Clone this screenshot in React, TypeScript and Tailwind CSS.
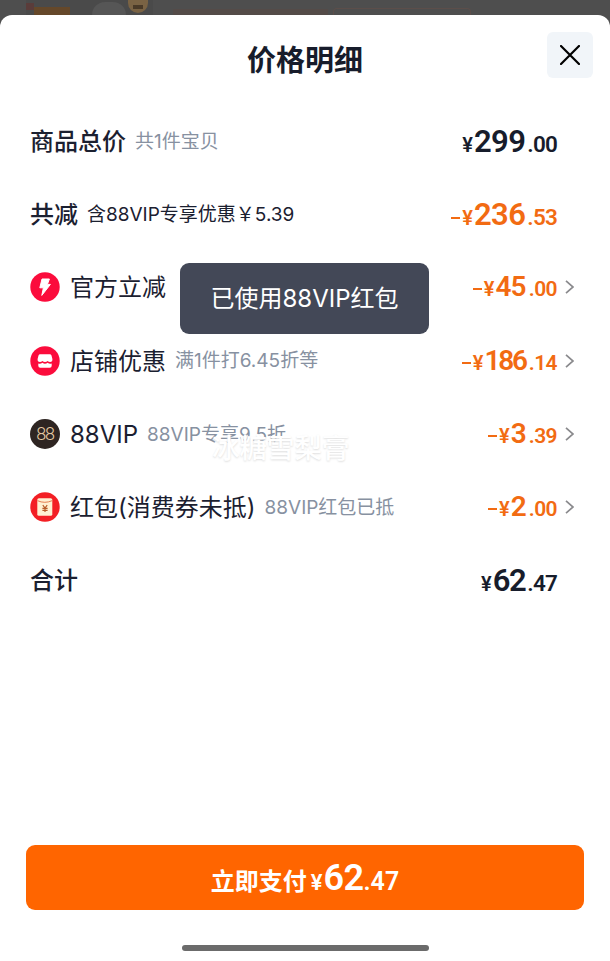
import React from 'react';

const Bolt = () => (
  <svg className="size-[30px]" viewBox="0 0 30 30">
    <circle cx="15" cy="15" r="14.7" fill="#fb0c3c" />
    <path
      d="M12 7h7.4l-2 5.4h3L11.8 23.400l1.600-7.600H9.800z"
      fill="#fff"
      stroke="#fff"
      strokeWidth="1"
      strokeLinejoin="round"
    />
  </svg>
);

const Shop = () => (
  <svg className="size-[30px]" viewBox="0 0 30 30">
    <circle cx="15" cy="15" r="14.7" fill="#fb0c3c" />
    <path
      d="M10.2 8.3h9.6q1.3 0 1.7 1.2l.9 3.6q.3 3-2.3 3-1.5 0-2.5-1.1-1.1 1.1-2.6 1.1T12.4 15q-1 1.1-2.5 1.1-2.6 0-2.3-3l.9-3.6q.4-1.2 1.700-1.200z"
      fill="#fff"
    />
    <path
      d="M8.3 17.5q2.3.6 4.1-.7 2.6 1.8 5.2 0 1.8 1.3 4.1.7v2.200q0 2-2 2h-9.400q-2 0-2-2z"
      fill="#fff"
    />
  </svg>
);

const Vip = () => (
  <span className="flex size-[30px] items-center justify-center rounded-full bg-[#2e2522]">
    <span className="font-['Roboto',sans-serif] text-[18px] leading-none font-light tracking-[-1.2px] text-[#e8cda5]">
      88
    </span>
  </span>
);

const Packet = () => (
  <svg className="size-[30px]" viewBox="0 0 30 30">
    <circle cx="15" cy="15" r="14.7" fill="#f31f24" />
    <rect x="7.3" y="6.2" width="15" height="17.6" rx="1.6" fill="#fff0d2" />
    <path d="M7.5 8.7q7.300 3.200 14.600 0" fill="none" stroke="#df7042" strokeWidth="0.9" />
    <path
      d="M12.8 13.2l2.2 2.8 2.2-2.8M15 16v4M12.4 16.4h5.2M12.4 18.3h5.2"
      fill="none"
      stroke="#b75b28"
      strokeWidth="1.2"
    />
  </svg>
);

const Chevron = () => (
  <svg className="h-[14px] w-[9px]" viewBox="0 0 9 14" fill="none">
    <path d="M1 0.8l7 6.2-7 6.2" stroke="#8a8a8d" strokeWidth="1.7" />
  </svg>
);

interface PriceProps {
  whole: string;
  cents: string;
  minus?: boolean;
  small?: boolean;
}

function Price({ whole, cents, minus = false, small = false }: PriceProps) {
  const wholeSize = small
    ? whole.length > 2
      ? 'text-[28px] tracking-[-2.2px]'
      : 'text-[28px] tracking-[-0.8px]'
    : whole.length > 2
      ? 'text-[31px] tracking-[-0.6px]'
      : 'text-[31px] tracking-[-1.4px]';

  return (
    <span
      className={`flex items-baseline font-['Roboto',sans-serif] leading-none font-semibold ${
        minus ? 'text-[#f26b12]' : 'text-[#171c2b]'
      }`}
    >
      {minus && <span className="mr-[2px] h-[2px] w-[9px] -translate-y-[6px] bg-[#f26b12]" />}
      <span className="mr-px text-[20px]">¥</span>
      <span className={wholeSize}>{whole}</span>
      <span
        className={
          small ? 'ml-[3px] text-[21px] tracking-[-0.6px]' : 'ml-[2px] text-[22.5px] tracking-[-0.8px]'
        }
      >
        .{cents}
      </span>
    </span>
  );
}

interface RowProps extends PriceProps {
  label: string;
  note?: string;
  noteDark?: boolean;
  icon?: React.ReactNode;
  bold?: boolean;
}

function Row({ label, note, noteDark, icon, bold, ...price }: RowProps) {
  return (
    <div className="flex h-[73.2px] items-center pr-[36px] pl-[30px]">
      {icon && <span className="mr-[10px] shrink-0">{icon}</span>}
      <span className={`mt-[2px] text-[24px] whitespace-nowrap text-[#1b2030] ${bold ? 'font-medium' : ''}`}>
        {label}
      </span>
      {note && (
        <span
          className={`mt-[2px] ml-[9px] text-[19px] whitespace-nowrap ${noteDark ? 'text-[#1b2030]' : 'text-[#8791a1]'}`}
        >
          {note}
        </span>
      )}
      <div className="ml-auto flex items-center">
        <Price {...price} />
        <span className="flex w-[17px] justify-end">{icon && <Chevron />}</span>
      </div>
    </div>
  );
}

export default function App() {
  return (
    <div className="relative flex h-[961px] w-[610px] flex-col overflow-hidden bg-[#4e4e4e] font-['Inter','Noto_Sans_CJK_SC',sans-serif]">
      {/* dimmed order page behind the sheet */}
      <div className="flex h-[15px] shrink-0 pl-[26px]">
        <div className="flex h-full w-[127px] items-end bg-[#4a4a4a]">
          <span className="mb-[5px] h-[7px] w-[8px] bg-[#5a3c3a]" />
          <span className="h-[8px] w-[36px] bg-[#65482a]" />
          <span className="ml-[22px] h-[13px] w-[34px] rounded-t-full bg-[#565656]" />
          <span className="mb-[2px] ml-[2px] flex h-[13px] w-[20px] items-center justify-center rounded-b-full bg-[#7a6344]">
            <span className="h-[4px] w-[10px] bg-[#4a3a28]" />
          </span>
        </div>
        <div className="mt-[9px] ml-[20px] h-[6px] w-[155px] bg-[#544b48]" />
        <div className="mt-[8px] ml-[5px] h-[7px] w-[138px] rounded-t-[4px] border border-b-0 border-[#5c4e4a]" />
      </div>

      <div className="flex flex-1 flex-col rounded-t-[12px] bg-white">
        <div className="grid h-[89.5px] grid-cols-[1fr_auto_1fr] items-center px-[17px]">
          <h1 className="col-start-2 mt-[2px] text-[29px] font-bold text-[#171c2b]">价格明细</h1>
          <button className="mb-[10px] flex size-[46px] items-center justify-center justify-self-end rounded-[6px] bg-[#f1f5f9]">
            <svg className="size-[20px]" viewBox="0 0 20 20" fill="none">
              <path d="M1 1l18 18M19 1L1 19" stroke="#000" strokeWidth="2.2" strokeLinecap="round" />
            </svg>
          </button>
        </div>

        <div className="flex flex-col">
          <Row label="商品总价" note="共1件宝贝" bold whole="299" cents="00" />
          <Row label="共减" note="含88VIP专享优惠￥5.39" noteDark bold minus whole="236" cents="53" />
          <Row icon={<Bolt />} label="官方立减" minus small whole="45" cents="00" />
          <Row icon={<Shop />} label="店铺优惠" note="满1件打6.45折等" minus small whole="186" cents="14" />
          <Row icon={<Vip />} label="88VIP" note="88VIP专享9.5折" minus small whole="3" cents="39" />
          <Row icon={<Packet />} label="红包(消费券未抵)" note="88VIP红包已抵" minus small whole="2" cents="00" />
          <Row label="合计" bold whole="62" cents="47" />
        </div>

        <div className="mt-auto flex flex-col items-center px-[26px] pb-[10px]">
          <button className="flex h-[65px] w-full items-center justify-center rounded-[9px] bg-[#ff6500] text-white">
            <span className="flex items-baseline">
              <span className="text-[24px] font-bold">立即支付</span>
              <span className="ml-[4px] font-['Roboto',sans-serif] font-semibold">
                <span className="text-[22px]">¥</span>
                <span className="ml-px text-[36px] tracking-[-0.6px]">62</span>
                <span className="text-[25px]">.47</span>
              </span>
            </span>
          </button>
          <div className="mt-[35px] h-[6px] w-[247px] rounded-full bg-[#6b6b6b]" />
        </div>
      </div>

      {/* floating watermark */}
      <span className="absolute top-[428px] left-[212px] text-[27.5px] font-medium whitespace-nowrap text-white [text-shadow:0_1px_2px_#dedede]">
        冰糖雪梨膏
      </span>

      <div className="absolute top-[263px] left-[180px] flex h-[71px] w-[249px] items-center justify-center rounded-[9px] bg-[#434857] text-[24px] text-white">
        已使用88VIP红包
      </div>
    </div>
  );
}
